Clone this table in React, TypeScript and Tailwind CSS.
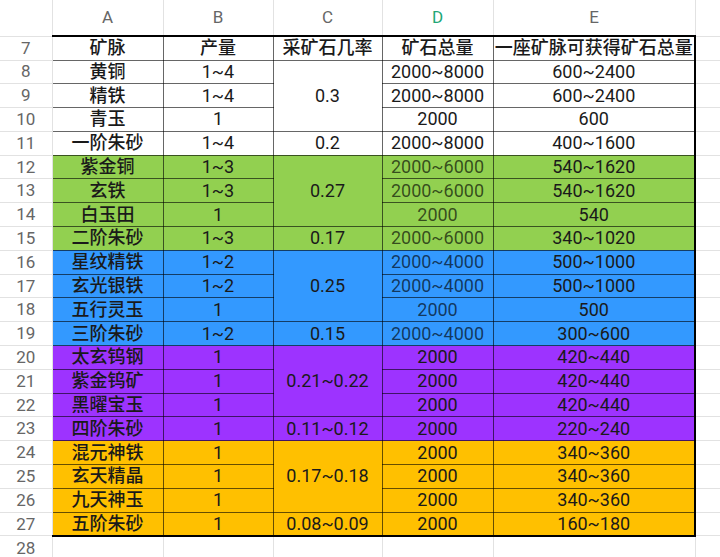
import React from 'react';

type Row = {
  n: number;
  a: string;
  b: string;
  c?: string;
  span?: number;
  d: string;
  e: string;
  group: 'white' | 'green' | 'blue' | 'purple' | 'yellow';
};

const rows: Row[] = [
  { n: 8, a: '黄铜', b: '1~4', c: '0.3', span: 3, d: '2000~8000', e: '600~2400', group: 'white' },
  { n: 9, a: '精铁', b: '1~4', d: '2000~8000', e: '600~2400', group: 'white' },
  { n: 10, a: '青玉', b: '1', d: '2000', e: '600', group: 'white' },
  { n: 11, a: '一阶朱砂', b: '1~4', c: '0.2', span: 1, d: '2000~8000', e: '400~1600', group: 'white' },
  { n: 12, a: '紫金铜', b: '1~3', c: '0.27', span: 3, d: '2000~6000', e: '540~1620', group: 'green' },
  { n: 13, a: '玄铁', b: '1~3', d: '2000~6000', e: '540~1620', group: 'green' },
  { n: 14, a: '白玉田', b: '1', d: '2000', e: '540', group: 'green' },
  { n: 15, a: '二阶朱砂', b: '1~3', c: '0.17', span: 1, d: '2000~6000', e: '340~1020', group: 'green' },
  { n: 16, a: '星纹精铁', b: '1~2', c: '0.25', span: 3, d: '2000~4000', e: '500~1000', group: 'blue' },
  { n: 17, a: '玄光银铁', b: '1~2', d: '2000~4000', e: '500~1000', group: 'blue' },
  { n: 18, a: '五行灵玉', b: '1', d: '2000', e: '500', group: 'blue' },
  { n: 19, a: '三阶朱砂', b: '1~2', c: '0.15', span: 1, d: '2000~4000', e: '300~600', group: 'blue' },
  { n: 20, a: '太玄钨钢', b: '1', c: '0.21~0.22', span: 3, d: '2000', e: '420~440', group: 'purple' },
  { n: 21, a: '紫金钨矿', b: '1', d: '2000', e: '420~440', group: 'purple' },
  { n: 22, a: '黑曜宝玉', b: '1', d: '2000', e: '420~440', group: 'purple' },
  { n: 23, a: '四阶朱砂', b: '1', c: '0.11~0.12', span: 1, d: '2000', e: '220~240', group: 'purple' },
  { n: 24, a: '混元神铁', b: '1', c: '0.17~0.18', span: 3, d: '2000', e: '340~360', group: 'yellow' },
  { n: 25, a: '玄天精晶', b: '1', d: '2000', e: '340~360', group: 'yellow' },
  { n: 26, a: '九天神玉', b: '1', d: '2000', e: '340~360', group: 'yellow' },
  { n: 27, a: '五阶朱砂', b: '1', c: '0.08~0.09', span: 1, d: '2000', e: '160~180', group: 'yellow' },
];

const bgOf = {
  white: 'bg-white',
  green: 'bg-[#92d050]',
  blue: 'bg-[#3399ff]',
  purple: 'bg-[#9d33ff]',
  yellow: 'bg-[#ffc000]',
};

// light grid outside the data block, dark grid inside it
const light = 'border border-[#e2e2e2]';
const dark = 'border border-black/60';

export default function App() {
  return (
    <div className="w-[720px] h-[557px] overflow-hidden bg-white font-['Roboto','Noto_Sans_CJK_SC',sans-serif]">
      <table className="table-fixed border-collapse w-[920px] text-[18px] leading-none text-[#1a1a1a]">
        <colgroup>
          <col className="w-[52px]" />
          <col className="w-[111px]" />
          <col className="w-[110px]" />
          <col className="w-[109px]" />
          <col className="w-[111px]" />
          <col className="w-[202px]" />
          <col className="w-[225px]" />
        </colgroup>
        <thead>
          <tr className="h-[36px]">
            <th className={`${light} border-t-0 border-l-0`} />
            {['A', 'B', 'C', 'D', 'E'].map((l) => (
              <th
                key={l}
                className={`${light} border-t-0 p-0 text-[17px] font-normal ${l === 'D' ? 'text-[#22a676]' : 'text-[#666]'}`}
              >
                {l}
              </th>
            ))}
            <th className={`${light} border-t-0 border-r-0`} />
          </tr>
        </thead>
        <tbody>
          <tr className="h-[24px]">
            <td className={`${light} border-l-0 p-0 text-center text-[17px] text-[#666]`}>7</td>
            {['矿脉', '产量', '采矿石几率', '矿石总量'].map((t) => (
              <td key={t} className={`${dark} border-t-2 border-t-black p-0 text-center font-medium whitespace-nowrap`}>
                {t}
              </td>
            ))}
            <td className={`${dark} border-t-2 border-t-black border-r-2 border-r-black p-0 text-center font-medium whitespace-nowrap`}>
              一座矿脉可获得矿石总量
            </td>
            <td className={`${light} border-r-0`} />
          </tr>
          {rows.map((r) => {
            const bg = bgOf[r.group];
            const last = r.n === 27 ? 'border-b-2 border-b-black' : '';
            const muted = r.group === 'green' || r.group === 'blue' ? 'text-black/65' : '';
            return (
              <tr key={r.n} className="h-[23.8px]">
                <td className={`${light} border-l-0 p-0 text-center text-[17px] text-[#666]`}>{r.n}</td>
                <td className={`${dark} ${bg} ${last} p-0 text-center font-medium whitespace-nowrap`}>{r.a}</td>
                <td className={`${dark} ${bg} ${last} p-0 text-center`}>{r.b}</td>
                {r.c !== undefined && (
                  <td
                    rowSpan={r.span}
                    className={`${dark} ${bg} ${r.n + (r.span ?? 1) - 1 === 27 ? 'border-b-2 border-b-black' : ''} p-0 text-center whitespace-nowrap`}
                  >
                    {r.c}
                  </td>
                )}
                <td className={`${dark} ${bg} ${last} ${muted} p-0 text-center`}>{r.d}</td>
                <td className={`${dark} ${bg} ${last} border-r-2 border-r-black p-0 text-center`}>{r.e}</td>
                <td className={`${light} border-r-0`} />
              </tr>
            );
          })}
          <tr className="h-[24px]">
            <td className={`${light} border-l-0 border-b-0 p-0 text-center text-[17px] text-[#666]`}>28</td>
            <td className={`${light} border-b-0`} />
            <td className={`${light} border-b-0`} />
            <td className={`${light} border-b-0`} />
            <td className={`${light} border-b-0`} />
            <td className={`${light} border-b-0`} />
            <td className={`${light} border-b-0 border-r-0`} />
          </tr>
        </tbody>
      </table>
    </div>
  );
}
